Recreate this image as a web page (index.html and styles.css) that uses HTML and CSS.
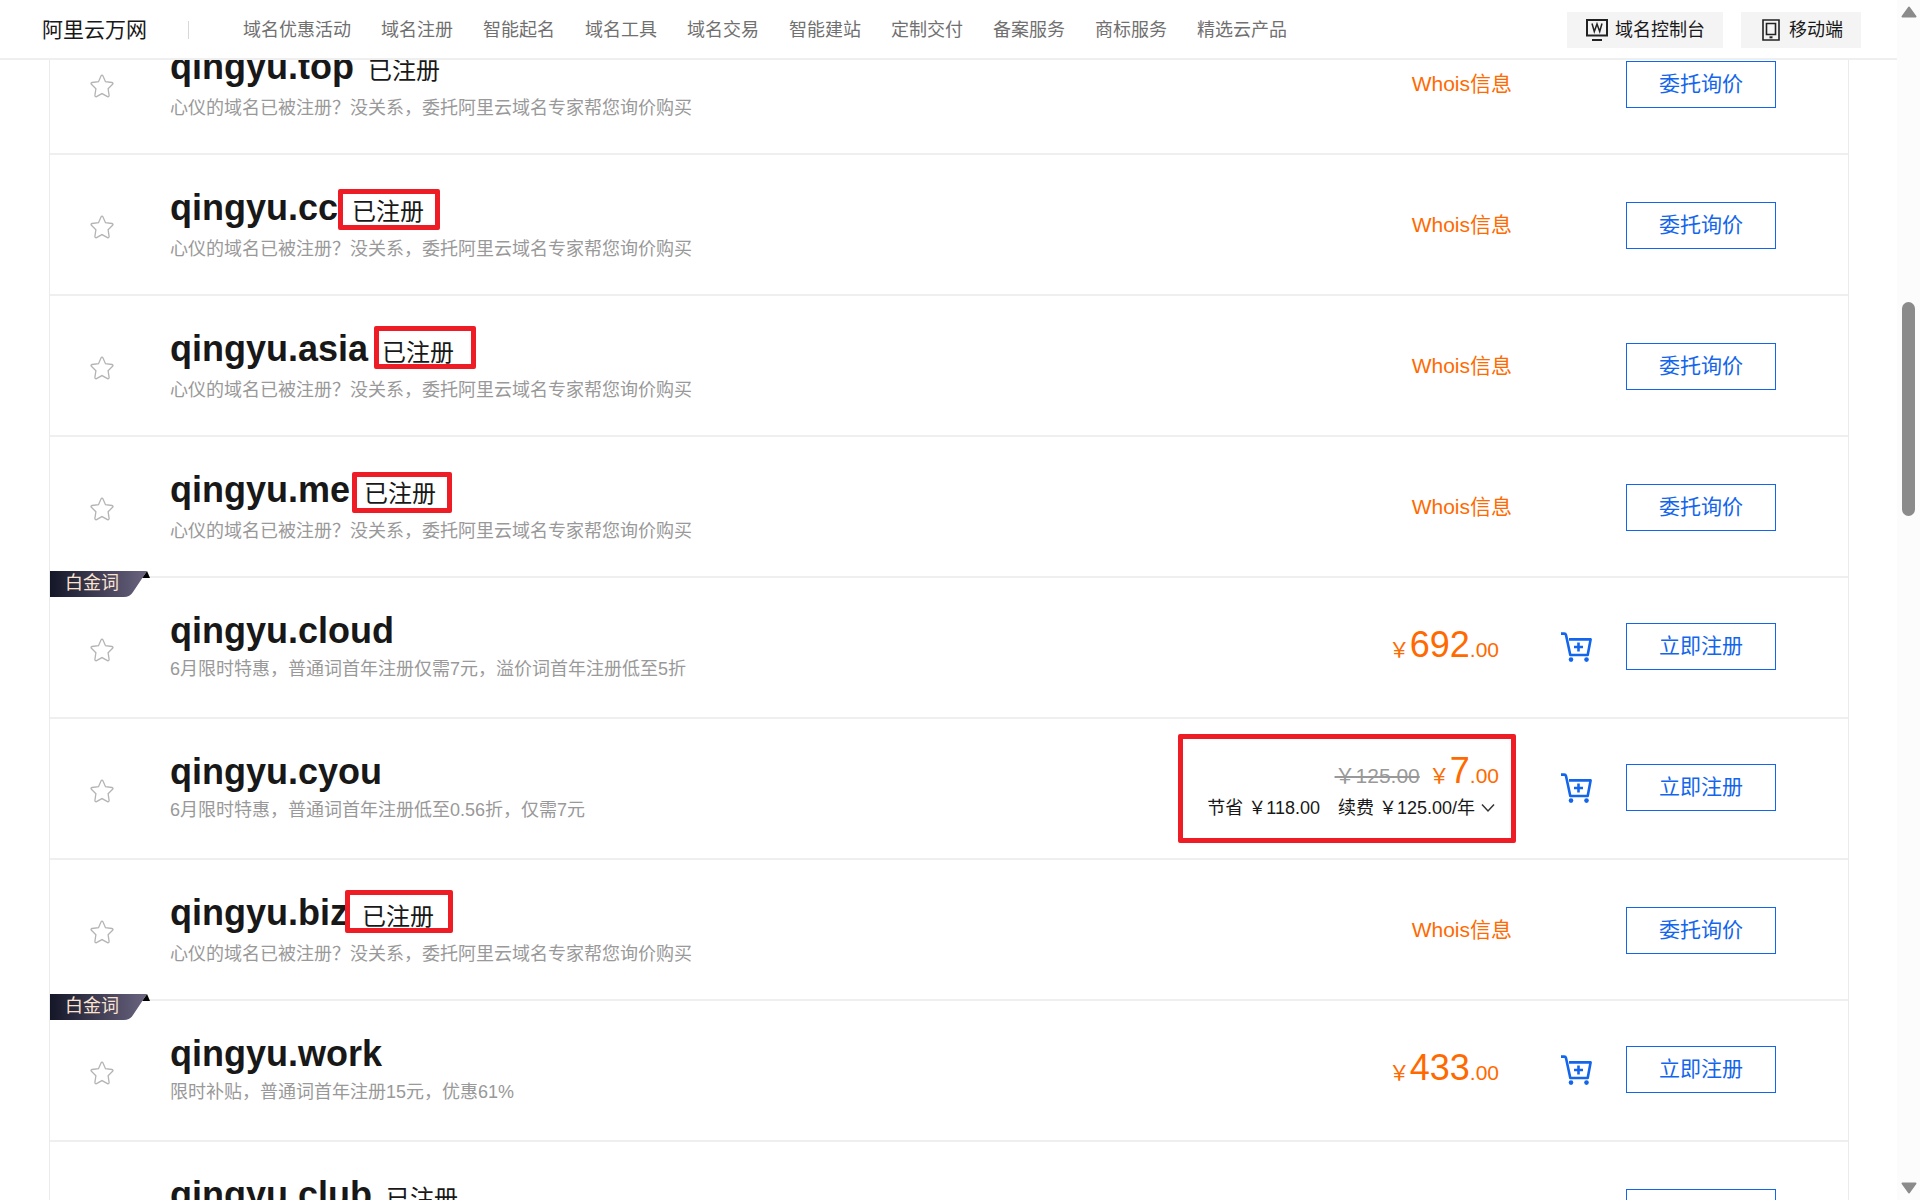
FILE: index.html
```html
<!DOCTYPE html>
<html lang="zh-CN">
<head>
<meta charset="utf-8">
<title>阿里云万网</title>
<link rel="stylesheet" href="styles.css">
</head>
<body>
<svg class="defs" aria-hidden="true">
  <symbol id="star" viewBox="0 0 24 24"><path d="M12 1.2c.5 0 .8.4 1 .8l2.500 5.700 6.500.8c1 .2 1.300 1.100.6 1.800l-4.500 4.400 1 6.700c.1 1-.7 1.600-1.600 1.200L12 19.600l-5.500 3c-.9.4-1.700-.2-1.600-1.200l1-6.700-4.500-4.400c-.7-.7-.4-1.600.6-1.800l6.500-.8L11 2c.2-.4.5-.8 1-.8z" fill="none" stroke="#b4b4b4" stroke-width="1.300"/></symbol>
  <symbol id="cart" viewBox="0 0 32 30"><g fill="none" stroke="#1366ec" stroke-width="2.600" stroke-linejoin="round"><path d="M1 1.600h3.200c1 0 1.600.5 1.800 1.400L10.300 23h17.400L30.600 7.400H9"/><path d="M18.500 10.500v9M14 15h9"/></g><circle cx="11" cy="27.600" r="2.300" fill="#1366ec"/><circle cx="26.500" cy="27.600" r="2.300" fill="#1366ec"/></symbol>
</svg>

<div class="page">
  <header class="header">
    <a class="logo" href="#">阿里云万网</a>
    <nav class="nav">
      <a href="#">域名优惠活动</a>
      <a href="#">域名注册</a>
      <a href="#">智能起名</a>
      <a href="#">域名工具</a>
      <a href="#">域名交易</a>
      <a href="#">智能建站</a>
      <a href="#">定制交付</a>
      <a href="#">备案服务</a>
      <a href="#">商标服务</a>
      <a href="#">精选云产品</a>
    </nav>
    <div class="tools">
      <button class="tool" type="button">
        <svg width="22" height="22" viewBox="0 0 22 22" fill="none" stroke="#222" stroke-width="2"><path d="M1 1h20v15.500H1zM6 21h10"/><path d="M6 4.500l2.300 8L11 5l2.700 7.500 2.300-8" stroke-width="1.500"/></svg>
        域名控制台
      </button>
      <button class="tool tool-mobile" type="button">
        <svg width="18" height="22" viewBox="0 0 18 22" fill="none" stroke="#222" stroke-width="1.600"><path d="M1 1h16v20H1z"/><path d="M4.500 4.500h9v11h-9z"/><path d="M7.500 18.300h3" stroke-width="2"/></svg>
        移动端
      </button>
    </div>
  </header>

  <main class="results">
    <ul class="list">
      <li class="row">
        <button class="fav" type="button" aria-label="收藏"><svg><use href="#star"/></svg></button>
        <div class="info taken"><h3><span class="domain">qingyu.top</span><span class="status">已注册</span></h3><p>心仪的域名已被注册？没关系，委托阿里云域名专家帮您询价购买</p></div>
        <a class="whois" href="#">Whois信息</a>
        <button class="btn" type="button">委托询价</button>
      </li>
      <li class="row">
        <button class="fav" type="button" aria-label="收藏"><svg><use href="#star"/></svg></button>
        <div class="info taken"><h3><span class="domain">qingyu.cc</span><span class="status">已注册</span></h3><p>心仪的域名已被注册？没关系，委托阿里云域名专家帮您询价购买</p></div>
        <a class="whois" href="#">Whois信息</a>
        <button class="btn" type="button">委托询价</button>
        <span class="mark mark-cc"></span>
      </li>
      <li class="row">
        <button class="fav" type="button" aria-label="收藏"><svg><use href="#star"/></svg></button>
        <div class="info taken"><h3><span class="domain">qingyu.asia</span><span class="status">已注册</span></h3><p>心仪的域名已被注册？没关系，委托阿里云域名专家帮您询价购买</p></div>
        <a class="whois" href="#">Whois信息</a>
        <button class="btn" type="button">委托询价</button>
        <span class="mark mark-asia"></span>
      </li>
      <li class="row">
        <button class="fav" type="button" aria-label="收藏"><svg><use href="#star"/></svg></button>
        <div class="info taken"><h3><span class="domain">qingyu.me</span><span class="status">已注册</span></h3><p>心仪的域名已被注册？没关系，委托阿里云域名专家帮您询价购买</p></div>
        <a class="whois" href="#">Whois信息</a>
        <button class="btn" type="button">委托询价</button>
        <span class="mark mark-me"></span>
      </li>
      <li class="row">
        <span class="badge"><svg viewBox="0 0 100 26"><defs><linearGradient id="g1"><stop offset="0" stop-color="#141728"/><stop offset="1" stop-color="#6b6480"/></linearGradient></defs><path d="M92 7l5-7 3 7z" fill="#000"/><path d="M0 0h97L83 21q-3 5-9 5H0z" fill="url(#g1)"/></svg><span>白金词</span></span>
        <button class="fav" type="button" aria-label="收藏"><svg><use href="#star"/></svg></button>
        <div class="info"><h3><span class="domain">qingyu.cloud</span></h3><p>6月限时特惠，普通词首年注册仅需7元，溢价词首年注册低至5折</p></div>
        <div class="price"><span>￥</span><b>692</b><span>.00</span></div>
        <button class="cart" type="button" aria-label="加入购物车"><svg><use href="#cart"/></svg></button>
        <button class="btn buy" type="button">立即注册</button>
      </li>
      <li class="row">
        <button class="fav" type="button" aria-label="收藏"><svg><use href="#star"/></svg></button>
        <div class="info"><h3><span class="domain">qingyu.cyou</span></h3><p>6月限时特惠，普通词首年注册低至0.56折，仅需7元</p></div>
        <div class="offer">
          <div class="price"><s>￥125.00</s><span>￥</span><b>7</b><span>.00</span></div>
          <div class="terms"><span>节省 ￥118.00</span><span>续费 ￥125.00/年</span><svg width="14" height="10" viewBox="0 0 14 10" fill="none" stroke="#333" stroke-width="1.500"><path d="M1 1.500l6 6.500 6-6.500"/></svg></div>
        </div>
        <button class="cart" type="button" aria-label="加入购物车"><svg><use href="#cart"/></svg></button>
        <button class="btn buy" type="button">立即注册</button>
        <span class="mark mark-price"></span>
      </li>
      <li class="row">
        <button class="fav" type="button" aria-label="收藏"><svg><use href="#star"/></svg></button>
        <div class="info taken"><h3><span class="domain">qingyu.biz</span><span class="status">已注册</span></h3><p>心仪的域名已被注册？没关系，委托阿里云域名专家帮您询价购买</p></div>
        <a class="whois" href="#">Whois信息</a>
        <button class="btn" type="button">委托询价</button>
        <span class="mark mark-biz"></span>
      </li>
      <li class="row">
        <span class="badge"><svg viewBox="0 0 100 26"><path d="M92 7l5-7 3 7z" fill="#000"/><path d="M0 0h97L83 21q-3 5-9 5H0z" fill="url(#g1)"/></svg><span>白金词</span></span>
        <button class="fav" type="button" aria-label="收藏"><svg><use href="#star"/></svg></button>
        <div class="info"><h3><span class="domain">qingyu.work</span></h3><p>限时补贴，普通词首年注册15元，优惠61%</p></div>
        <div class="price"><span>￥</span><b>433</b><span>.00</span></div>
        <button class="cart" type="button" aria-label="加入购物车"><svg><use href="#cart"/></svg></button>
        <button class="btn buy" type="button">立即注册</button>
      </li>
      <li class="row">
        <button class="fav" type="button" aria-label="收藏"><svg><use href="#star"/></svg></button>
        <div class="info taken"><h3><span class="domain">qingyu.club</span><span class="status">已注册</span></h3><p>心仪的域名已被注册？没关系，委托阿里云域名专家帮您询价购买</p></div>
        <a class="whois" href="#">Whois信息</a>
        <button class="btn" type="button">委托询价</button>
      </li>
    </ul>
  </main>
</div>

<aside class="scrollbar" aria-hidden="true">
  <svg width="16" height="12" viewBox="0 0 16 12"><path d="M8 1.500L14.500 10.500h-13z" fill="#8b8b8b" stroke="#8b8b8b" stroke-width="2" stroke-linejoin="round"/></svg>
  <div class="track"><div class="thumb"></div></div>
  <svg width="16" height="12" viewBox="0 0 16 12"><path d="M8 10.500L14.500 1.500h-13z" fill="#8b8b8b" stroke="#8b8b8b" stroke-width="2" stroke-linejoin="round"/></svg>
</aside>
</body>
</html>
```

FILE: styles.css
```css
* {
  box-sizing: border-box;
}

body {
  margin: 0;
  height: 100vh;
  display: flex;
  overflow: hidden;
  background: #fff;
  color: #181818;
  font: 18px/28px "Liberation Sans", "Noto Sans CJK SC", sans-serif;
}

h3, p, ul {
  margin: 0;
  padding: 0;
  font-weight: normal;
}

a {
  color: inherit;
  text-decoration: none;
}

button {
  padding: 0;
  border: 0;
  background: none;
  color: inherit;
  font: inherit;
  cursor: pointer;
}

svg {
  display: block;
}

.defs {
  position: absolute;
  width: 0;
  height: 0;
}

.page {
  position: relative;
  flex: 1;
  min-width: 0;
  overflow: hidden;
}

/* Top bar, stays above the scrolled list */
.header {
  position: absolute;
  z-index: 5;
  top: 0;
  left: 0;
  right: 0;
  height: 60px;
  padding: 2px 36px 0 42px;
  display: flex;
  align-items: center;
  background: #fff;
  border-bottom: 2px solid #efefef;
  white-space: nowrap;
}

.logo {
  font-size: 21px;
}

.logo::after {
  content: "";
  display: inline-block;
  width: 1px;
  height: 18px;
  margin-left: 41px;
  vertical-align: -2px;
  background: #d8d8d8;
}

.nav {
  display: flex;
  gap: 30px;
  margin-left: 54px;
  color: #707070;
}

.tools {
  display: flex;
  gap: 18px;
  margin-left: auto;
}

.tool {
  height: 36px;
  padding: 0 18px 0 19px;
  display: flex;
  align-items: center;
  gap: 7px;
  background: #f4f4f4;
}

.tool-mobile {
  padding: 0 18px 0 21px;
  gap: 9px;
}

/* Domain list */
.results {
  padding: 14px 48px 0 49px;
}

.list {
  list-style: none;
  border: solid #ebebeb;
  border-width: 0 1px;
}

.row {
  position: relative;
  display: flex;
  align-items: center;
  min-height: 141px;
  padding: 0 72px 0 40px;
  border-bottom: 2px solid #efefef;
  white-space: nowrap;
}

.fav {
  width: 24px;
  margin: 4px 56px 0 0;
}

.fav svg {
  width: 24px;
  height: 24px;
}

.info {
  flex: 1;
  align-self: flex-start;
  padding-top: 32px;
}

.info h3 {
  display: flex;
  align-items: baseline;
  gap: 14px;
  height: 42px;
  line-height: 42px;
}

.domain {
  font-size: 36px;
  font-weight: bold;
}

.status {
  font-size: 24px;
}

.info p {
  margin-top: 3px;
  color: #999;
}

.taken p {
  margin-top: 6px;
}

.whois {
  margin-right: 114px;
  color: #ff6a00;
  font-size: 21px;
}

.btn {
  width: 150px;
  height: 47px;
  margin-top: 2px;
  padding-bottom: 2px;
  border: 1px solid #1366ec;
  color: #1366ec;
  font-size: 21px;
}

.buy, .cart {
  margin: 0 0 2px;
}

.cart {
  margin-right: 34px;
}

.cart svg {
  width: 32px;
  height: 30px;
}

.price {
  display: flex;
  align-items: baseline;
  justify-content: flex-end;
  margin-right: 61px;
  color: #ff6a00;
  font-size: 21px;
  line-height: 36px;
}

.price b {
  font-size: 36px;
  font-weight: normal;
}

.price s {
  margin-right: 9px;
  color: #999;
}

.offer {
  margin-right: 61px;
  padding-bottom: 2px;
}

.offer .price {
  margin-right: 0;
}

.terms {
  display: flex;
  align-items: center;
  justify-content: flex-end;
  gap: 18px;
  padding-right: 4px;
}

.terms svg {
  margin-left: -12px;
}

/* Platinum word ribbon */
.badge {
  position: absolute;
  top: -7px;
  left: 0;
  width: 100px;
  height: 26px;
  color: #fbe3d0;
  line-height: 24px;
}

.badge svg {
  position: absolute;
  inset: 0;
}

.badge span {
  position: relative;
  padding-left: 15px;
}

/* Red annotation frames */
.mark {
  position: absolute;
  border: 5px solid #ee1c24;
  border-radius: 2px;
  pointer-events: none;
}

.mark-cc {
  left: 288px;
  top: 34px;
  width: 102px;
  height: 41px;
}

.mark-asia {
  left: 324px;
  top: 30px;
  width: 102px;
  height: 43px;
}

.mark-me {
  left: 302px;
  top: 35px;
  width: 100px;
  height: 41px;
}

.mark-biz {
  left: 295px;
  top: 30px;
  width: 108px;
  height: 43px;
}

.mark-price {
  right: 332px;
  top: 15px;
  width: 338px;
  height: 109px;
}

/* Window scrollbar */
.scrollbar {
  width: 23px;
  padding: 6px 0;
  display: flex;
  flex-direction: column;
  align-items: center;
  background: #fcfcfc;
}

.track {
  flex: 1;
  padding-top: 284px;
}

.thumb {
  width: 13px;
  height: 214px;
  border-radius: 7px;
  background: #8b8b8b;
}
```
